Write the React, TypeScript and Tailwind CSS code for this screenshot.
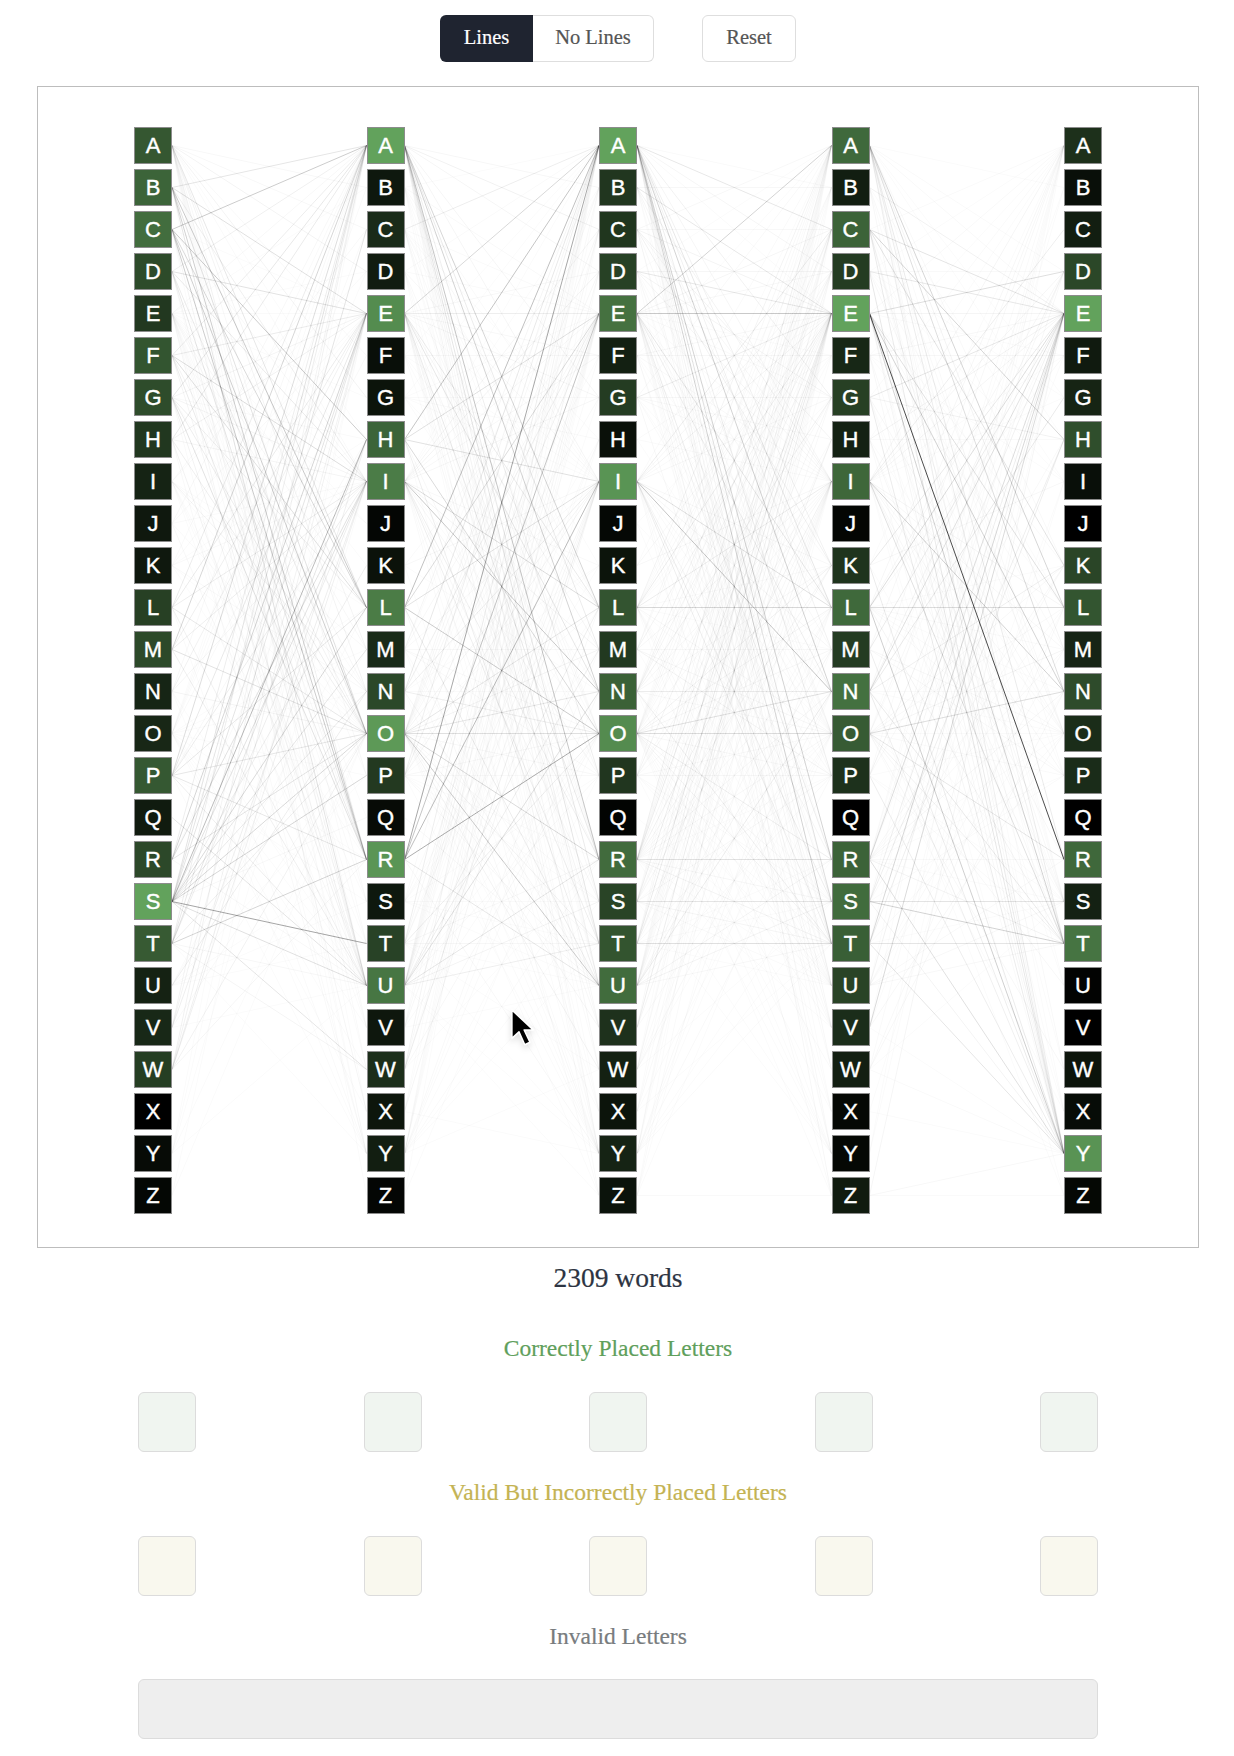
import React from 'react';

const LETTERS = 'ABCDEFGHIJKLMNOPQRSTUVWXYZ'.split('');

// how many words have each letter at each position
const COUNTS = [
  [141, 173, 198, 111, 72, 136, 115, 69, 34, 20, 20, 88, 107, 37, 41, 142, 23, 105, 366, 149, 33, 43, 83, 0, 6, 3],
  [304, 16, 40, 20, 242, 8, 12, 144, 202, 2, 10, 201, 38, 87, 279, 61, 5, 267, 16, 77, 186, 15, 44, 14, 23, 2],
  [307, 57, 56, 75, 177, 25, 67, 9, 266, 3, 12, 112, 61, 139, 243, 57, 1, 163, 80, 111, 165, 49, 26, 12, 29, 11],
  [163, 24, 150, 69, 318, 35, 76, 28, 158, 2, 55, 162, 68, 182, 132, 50, 0, 150, 171, 139, 82, 45, 25, 3, 3, 20],
  [64, 11, 31, 118, 422, 26, 41, 137, 11, 0, 113, 156, 42, 130, 58, 56, 0, 212, 36, 253, 1, 0, 17, 8, 364, 4],
];

// letter pairs between neighbouring positions
const PAIRS = [
  'A:B5 C6 D10 F4 G10 H1 I3 L20 M9 N10 P5 R12 S3 T3 U3 V3 W3 X1 Z1|B:A22 E26 I13 L40 O24 R37 U23 Y2|C:A40 E1 H40 I4 L30 O38 R40 U10 Y2|D:A13 E24 I18 O17 R20 U10 W2|E:A5 B1 D2 E1 G2 I1 J1 K1 L6 M5 N7 P3 Q2 R5 S3 T3 V3 X8|F:A16 E17 I28 J1 L26 O11 R18 U9|G:A20 E9 H3 I9 L13 N2 O15 R24 U11 Y3|H:A18 E12 I9 O13 U11 Y4|I:C4 D3 L2 M4 N10 O2 R2 S2 T2 V2|J:A5 E4 I3 O3 U5|K:A3 E3 H2 I4 N4 O2 R2|L:A17 E17 I15 O19 U12 Y3|M:A33 E13 I14 O24 U13|N:A5 E12 I8 O9 U2 Y1|O:A2 B3 C3 D2 F4 L2 M1 N2 P2 R2 T2 U2 V2 W2 X1|P:A28 E19 H5 I15 L19 O21 R20 S2 U15 Y1|Q:U23|R:A15 E34 H3 I25 O23 U5|S:A24 C23 E23 H51 I24 K14 L31 M21 N18 O31 P33 Q5 T65 U26 W22|T:A15 E19 H22 I15 O14 R34 U7 W9 Y1|U:L3 M1 N14 P2 R1 S1 T2|V:A10 E11 I14 O4 U1|W:A12 E12 H13 I13 O12 R8|Y:A1 E2 I1 O1 U1|Z:E1 O1',
  'A:B7 C12 D8 G8 I8 L33 M17 N35 P14 R44 S18 T22 U12 V6 W7 X2 Y6 Z3|B:A1 E4 I3 L2 O2 R1 U1 Y1|C:A15 E3 H2 I1 K2 L3 O4 R5 T2 U2|D:A3 E3 I6 O4 R2 U1 Y1|E:A32 D5 E14 F5 G7 I2 L17 M8 N20 P5 R18 S5 T10 V6 W3 X2 Y2|F:A1 F4 I1 L1 O1 T1|G:A2 E2 G2 H3 I1 L2 N1|H:A45 E25 I25 O30 R5 U14 Y2|I:A2 B2 C8 D10 E5 F5 G7 K4 L28 M9 N42 O1 P7 R13 S7 T14 V6 X2 Z3|K:E3 I5 N1 Y1|L:A48 E29 I24 O40 U15 Y5|M:A8 B2 E6 I4 M4 O4 P4 U3 Y2|N:A19 E14 I14 K1 N1 O14 U7 Y2|O:A8 B5 C7 D7 E2 F2 G4 I9 K1 L20 M10 N20 O26 P5 R30 S4 T11 U40 V7 W10 X1 Y3 Z1|P:A13 E12 H1 I9 L3 O6 P3 R1 S1 T3 U5 Y2|Q:U5|R:A64 E45 I50 O60 U20 Y5|S:C3 H3 K1 L1 M1 P1 S2 T2 U1|T:A14 E7 H1 I7 O14 R6 T6 U1 W1 Y1|U:A7 B4 C7 D7 E6 F3 G2 I8 L13 M14 N25 O2 P4 R20 S10 T14 Y1 Z2|V:A2 E4 I5 O3 U1|W:A10 E6 H1 I14 O5 R1|X:A2 E2 I8 Y1|Y:A3 B1 C2 D1 E2 L4 M1 N3 P2 R3 S1 T1 W1|Z:A1 O1',
  'A:B3 C20 D8 E3 G12 I8 K12 L20 M12 N35 P14 R35 S25 T35 U8 V7 W5 X1 Y5 Z7|B:B6 E20 I10 L7 O6 S1 U2|C:A6 C4 E10 H10 I5 K12 O4 T5 U1|D:A2 D7 E20 G9 I8 L2 O3 R2 S1 Y1|E:A35 C8 D6 E42 F2 G3 I3 K3 L20 M4 N15 P5 R15 S9 T6 V7 W3 X1 Y2|F:A1 E5 F5 I4 L2 O1 T4 U1|G:A4 E15 G6 H4 I4 L2 N1 O3 U5|H:E3 I3 O1|I:A3 C15 D7 E10 F3 G5 K6 L25 M7 N45 O3 P3 R8 S15 T14 V3 X2 Z3|J:E1 O1 U1|K:A2 E5 I5|L:A10 B1 C1 D5 E15 F2 G2 I15 K3 L32 M2 O6 P1 S2 T2 U3 V3 Y1|M:A5 B4 E10 I7 M4 O7 P10 U2|N:A4 C10 D7 E9 G12 I6 K6 N16 O4 S1 T13 U1 Y1|O:A2 B3 C6 D6 E3 F2 G4 I4 K12 L9 M7 N25 O28 P6 R14 S5 T10 U6 V3 W3 X1 Y1 Z2|P:A4 E10 H3 I7 L3 O4 P6 S3 T3 U2 Y1|Q:U1|R:A13 B3 C6 D8 E16 G7 I12 K8 L2 M4 N7 O6 P1 R24 S7 T10 U2 V2 Y1|S:A3 C3 E15 H4 I6 K7 O2 P5 S22 T9 U3 Y1|T:A4 C8 E18 H10 I7 L3 O4 R2 S1 T26 U2|U:A5 B2 C4 D6 E4 F1 G4 I4 L6 M9 N15 P4 R9 S10 T6|V:A5 E15 I8 O3|W:A1 D1 E5 I3 L2 N6 O1 S1|X:A1 E3 I4 O1 T2|Y:A1 B1 C2 E1 L4 M1 N1 P4 R1 S2 T3|Z:A2 E3 I1 O1 Z3',
  'A:B2 D3 E4 G2 H1 K4 L33 M10 N27 P3 R18 S2 T16 W4 X1 Y14|B:E12 I1 O4 S1 Y6|C:A3 E23 H33 K23 O2 S1 T9 U1 Y18|D:A2 D3 E20 G1 I2 L2 O6 Y20|E:A4 D27 E8 F1 K3 L25 M3 N35 P1 R125 S5 T35 W2 X1 Y8|F:A2 E6 F5 I1 L2 T4 Y5|G:A3 E20 H11 O5 S2 U1 Y17|H:A2 E10 H1 O2 S1 T6 Y3|I:A8 C14 D8 E8 F1 G1 L8 M6 N35 O4 P5 R6 S5 T25 X1 Z2|K:A1 E18 I5 S2 Y17|L:A7 D7 E28 F4 K2 L28 M3 N1 O3 P3 T9 Y38|M:A6 E16 O5 P6 Y15|N:A6 D10 E25 G18 K13 N2 O2 S1 T18 Y13 Z1|O:B2 D5 E2 K6 L4 M8 N28 O2 P3 R20 S2 T12 U5 W5 X1|P:A3 E12 H4 O2 S2 T3 Y15|R:A3 B2 D5 E28 F2 K6 L3 M4 N7 O2 P1 R3 S2 T10 Y26|S:A1 E14 H14 K4 P3 S23 T35 Y10|T:A2 E32 H14 O3 S1 T22 Y22|U:A1 E12 L1 M4 N2 R4 S6 T6|V:A1 E30 I1 O5 Y2|W:E3 L4 N6 S1 Y3|X:I1 Y1|Y:A1 E1|Z:E8 Y6 Z1',
];

const TILE_W = 38;
const TILE_H = 37;
const ROW = 42;
const COL = 232.5;

function parseLinks(gap: number) {
  const links: { from: number; to: number; n: number }[] = [];
  PAIRS[gap].split('|').forEach((chunk) => {
    const [a, rest] = chunk.split(':');
    rest.split(' ').forEach((p) => {
      links.push({ from: a.charCodeAt(0) - 65, to: p.charCodeAt(0) - 65, n: Number(p.slice(1)) });
    });
  });
  return links;
}

function tileColor(count: number, max: number) {
  const t = Math.pow(count / max, 0.65);
  return `rgb(${Math.round(98 * t)}, ${Math.round(162 * t)}, ${Math.round(92 * t)})`;
}

const Lines = () => (
  <svg className="absolute inset-0 overflow-visible" width={968} height={1087} viewBox="0 0 968 1087" fill="none">
    {[0, 1, 2, 3].map((gap) =>
      parseLinks(gap).map((l) => (
        <line
          key={`${gap}-${l.from}-${l.to}`}
          x1={gap * COL + TILE_W}
          y1={l.from * ROW + TILE_H / 2}
          x2={(gap + 1) * COL}
          y2={l.to * ROW + TILE_H / 2}
          stroke="#000"
          strokeWidth={1}
          strokeOpacity={Math.min(0.7, Math.pow(l.n / 130, 1.25) * 0.8 + 0.016)}
        />
      )),
    )}
  </svg>
);

const Cursor = () => (
  <svg className="absolute left-[508px] top-[1006px] drop-shadow-md" width="31" height="44" viewBox="0 0 24 34">
    <path d="M3 3 L3 25 L8.5 20 L13 30 L17 28 L12.5 18.5 L19.5 18.5 Z" fill="#000" stroke="#fff" strokeWidth="1.2" strokeLinejoin="round" />
  </svg>
);

const Column = ({ counts }: { counts: number[] }) => {
  const max = Math.max(...counts);
  return (
    <div className="flex flex-col gap-[5px]">
      {LETTERS.map((letter, i) => (
        <div
          key={letter}
          style={{ backgroundColor: tileColor(counts[i], max) }}
          className="flex h-[37px] w-[38px] items-center justify-center border border-[#8c8c8c] font-['Liberation_Sans',sans-serif] text-[22px] leading-none text-white [-webkit-text-stroke:0.4px_white]"
        >
          {letter}
        </div>
      ))}
    </div>
  );
};

const Slots = ({ color }: { color: string }) => (
  <div className="flex justify-between">
    {[0, 1, 2, 3, 4].map((i) => (
      <div key={i} className={`h-[60px] w-[58px] rounded-md border border-[#dcdcdc] ${color}`} />
    ))}
  </div>
);

export default function App() {
  return (
    <div className="relative h-[1756px] w-[1234px] overflow-hidden bg-white font-['Liberation_Serif',serif] [-webkit-text-stroke:0.2px]">
      <div className="flex justify-start pl-[440px] pt-[15px]">
        <div className="flex h-[47px] text-[20.5px]">
          <button className="w-[93px] rounded-l-md bg-[#1f2430] pb-[3px] text-white">Lines</button>
          <button className="w-[121px] rounded-r-md border border-l-0 border-[#dedede] pb-[3px] text-[#555]">No Lines</button>
        </div>
        <button className="ml-[48px] h-[47px] w-[94px] rounded-md border border-[#dedede] pb-[3px] text-[20.5px] text-[#555]">Reset</button>
      </div>

      <div className="ml-[37px] mt-[24px] h-[1162px] w-[1162px] border border-[#bdbdbd] px-[96px] pt-[40px]">
        <div className="relative flex w-[968px] justify-between">
          <Lines />
          {COUNTS.map((counts, i) => (
            <div key={i} className="relative">
              <Column counts={counts} />
            </div>
          ))}
        </div>
      </div>

      <p className="mt-[14px] pl-[2px] text-center text-[27.5px] leading-[32px] text-[#2d3442]">2309 words</p>

      <div className="ml-[138px] w-[960px]">
        <h3 className="mt-[40px] text-center text-[23.5px] leading-[28px] text-[#5f9f5c]">Correctly Placed Letters</h3>
        <div className="mt-[30px]">
          <Slots color="bg-[#f0f5f0]" />
        </div>
        <h3 className="mt-[26px] text-center text-[23.5px] leading-[28px] text-[#c4b353]">Valid But Incorrectly Placed Letters</h3>
        <div className="mt-[30px]">
          <Slots color="bg-[#f9f8ee]" />
        </div>
        <h3 className="mt-[26px] text-center text-[23.5px] leading-[28px] text-[#787c7e]">Invalid Letters</h3>
        <div className="mt-[29px] h-[60px] rounded-md border border-[#dcdcdc] bg-[#eeeeee]" />
      </div>

      <Cursor />
    </div>
  );
}
